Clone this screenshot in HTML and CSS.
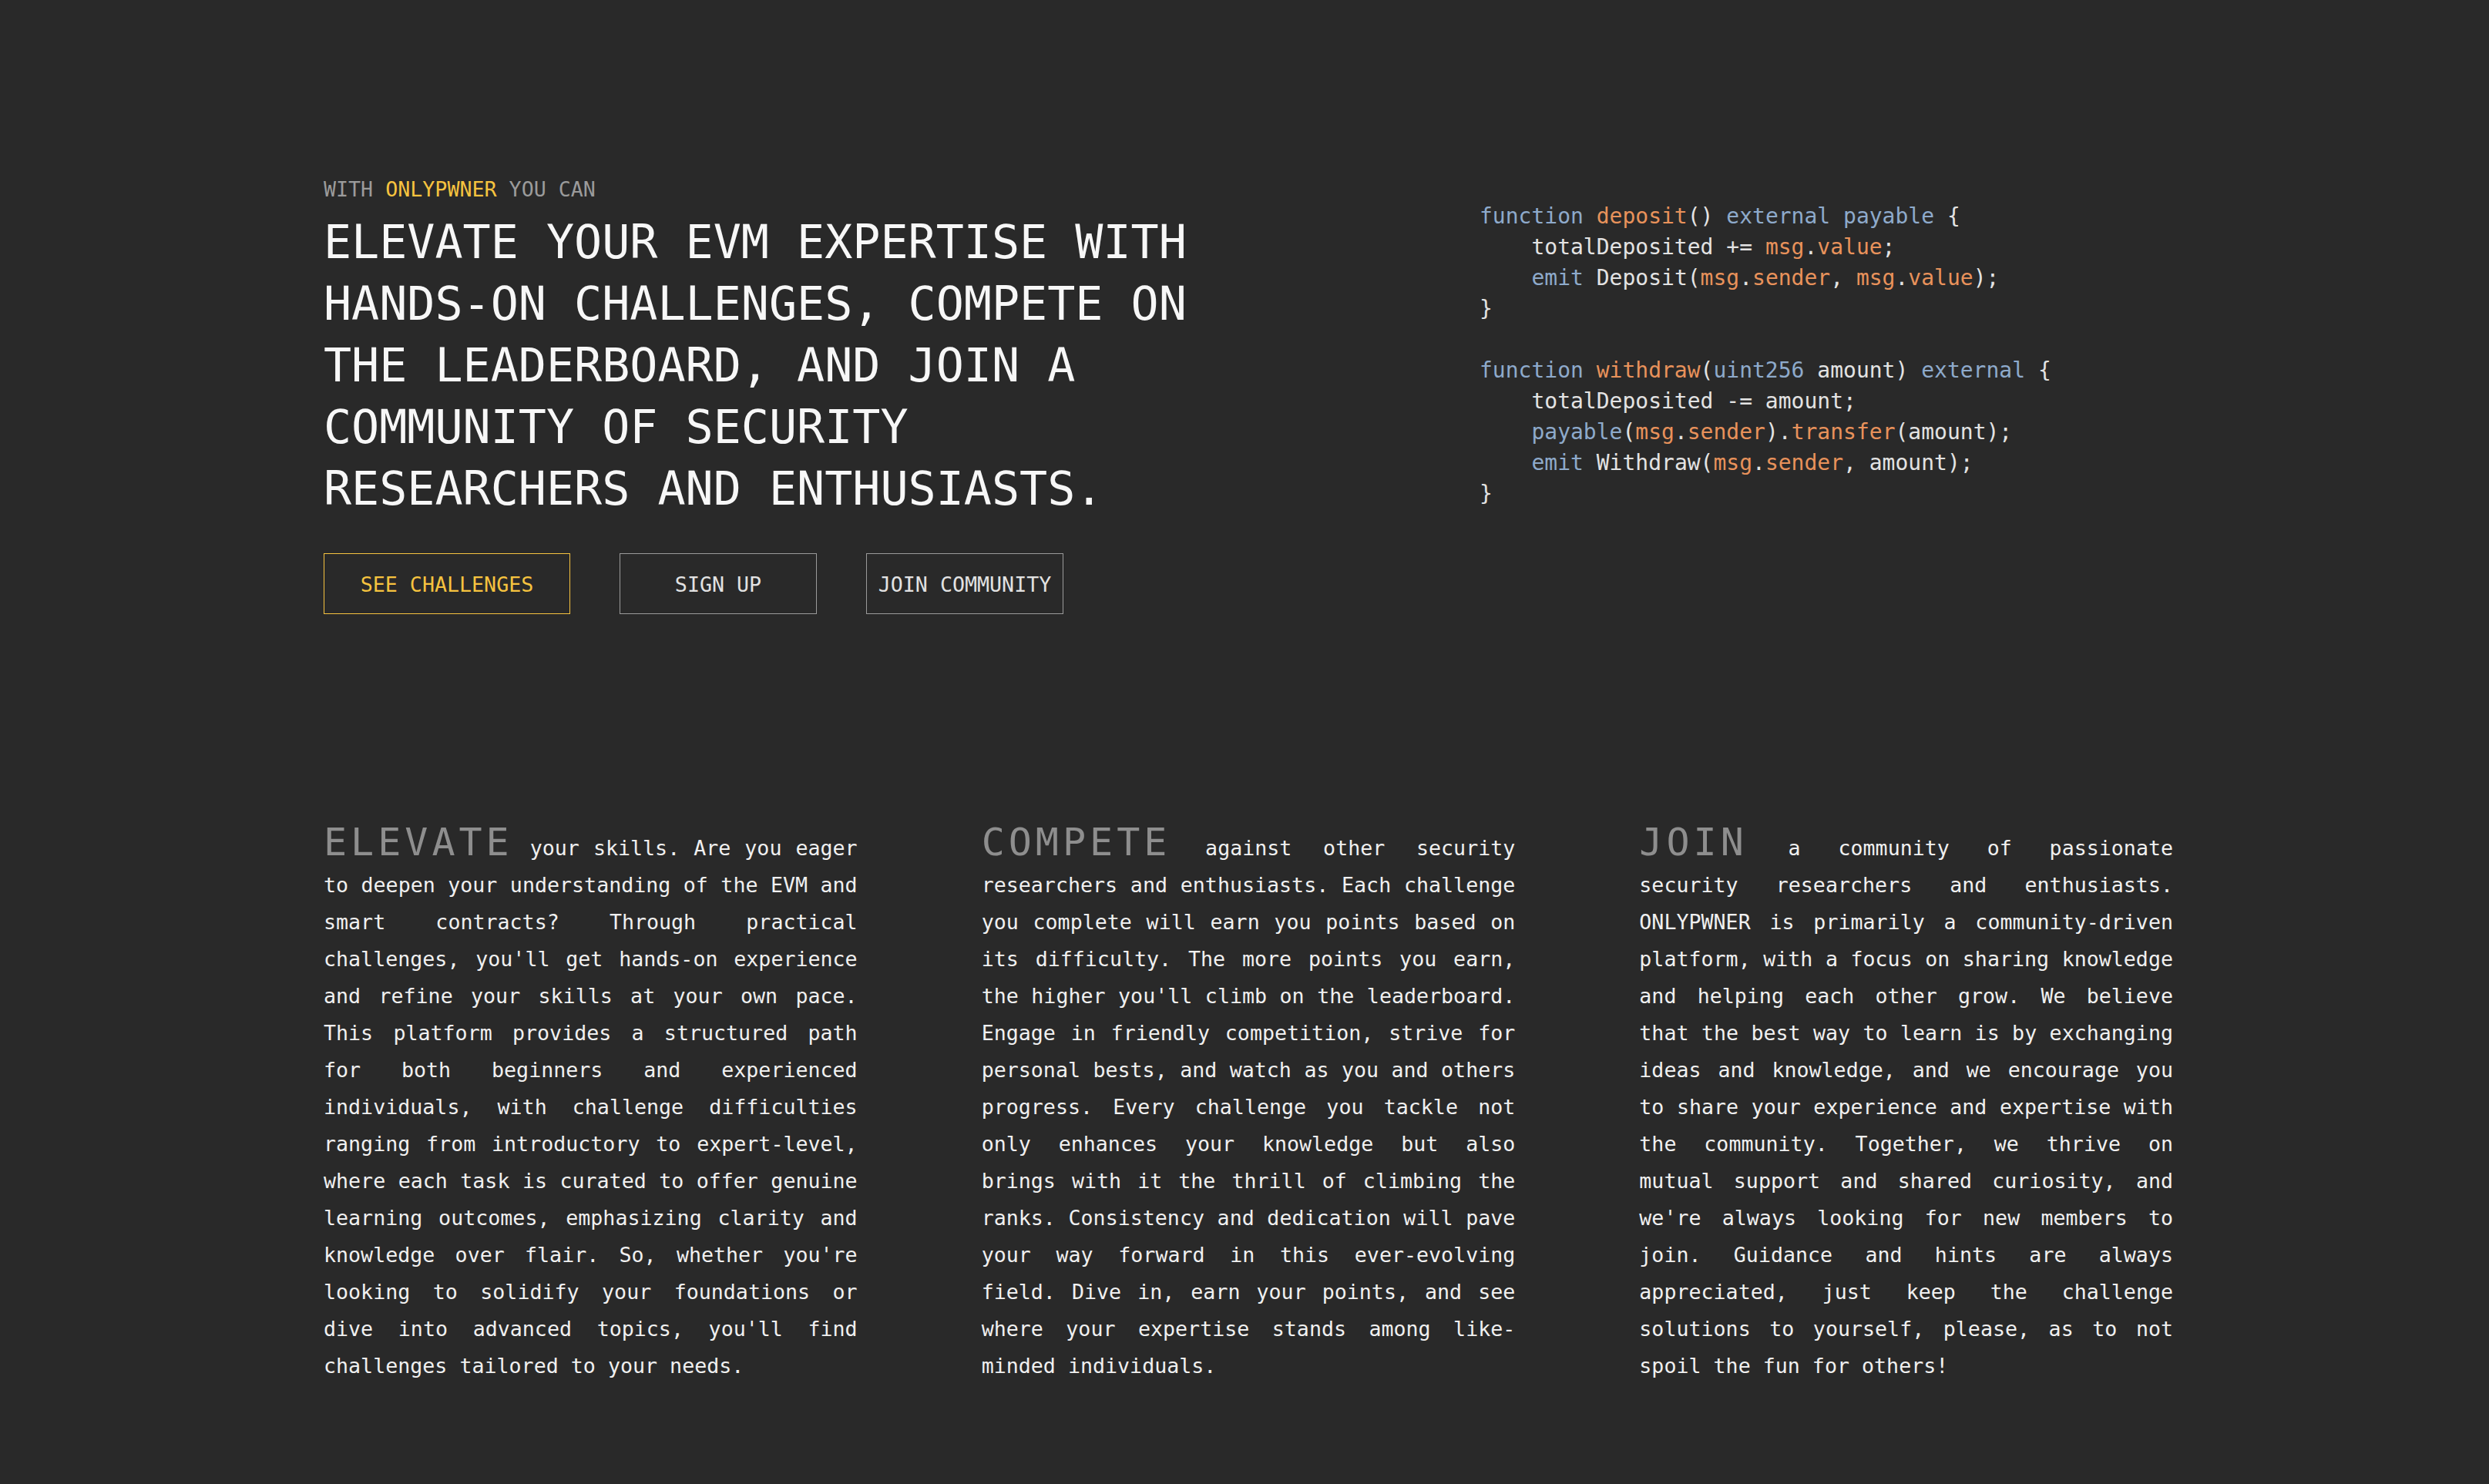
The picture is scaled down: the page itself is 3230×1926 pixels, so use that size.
FILE: index.html
```html
<!DOCTYPE html>
<html lang="en">
<head>
<meta charset="utf-8">
<title>OnlyPwner</title>
<link rel="stylesheet" href="styles.css">
</head>
<body>
<main class="page">
  <section class="hero">
    <div class="hero-text">
      <p class="kicker">WITH <span class="brand">ONLYPWNER</span> YOU CAN</p>
      <h1 class="headline">ELEVATE YOUR EVM EXPERTISE WITH HANDS-ON CHALLENGES, COMPETE ON THE LEADERBOARD, AND JOIN A COMMUNITY OF SECURITY RESEARCHERS AND ENTHUSIASTS.</h1>
      <div class="actions">
        <a class="btn btn-primary">SEE CHALLENGES</a>
        <a class="btn btn-secondary">SIGN UP</a>
        <a class="btn btn-secondary">JOIN COMMUNITY</a>
      </div>
    </div>
    <pre class="code"><span class="kw">function</span> <span class="fn">deposit</span>() <span class="kw">external</span> <span class="kw">payable</span> {
    totalDeposited += <span class="fn">msg</span>.<span class="fn">value</span>;
    <span class="kw">emit</span> Deposit(<span class="fn">msg</span>.<span class="fn">sender</span>, <span class="fn">msg</span>.<span class="fn">value</span>);
}

<span class="kw">function</span> <span class="fn">withdraw</span>(<span class="kw">uint256</span> amount) <span class="kw">external</span> {
    totalDeposited -= amount;
    <span class="kw">payable</span>(<span class="fn">msg</span>.<span class="fn">sender</span>).<span class="fn">transfer</span>(amount);
    <span class="kw">emit</span> Withdraw(<span class="fn">msg</span>.<span class="fn">sender</span>, amount);
}</pre>
  </section>

  <section class="features">
    <p class="feature"><span class="feature-title">ELEVATE</span> your skills. Are you eager to deepen your understanding of the EVM and smart contracts? Through practical challenges, you'll get hands-on experience and refine your skills at your own pace. This platform provides a structured path for both beginners and experienced individuals, with challenge difficulties ranging from introductory to expert-level, where each task is curated to offer genuine learning outcomes, emphasizing clarity and knowledge over flair. So, whether you're looking to solidify your foundations or dive into advanced topics, you'll find challenges tailored to your needs.</p>
    <p class="feature"><span class="feature-title">COMPETE</span> against other security researchers and enthusiasts. Each challenge you complete will earn you points based on its difficulty. The more points you earn, the higher you'll climb on the leaderboard. Engage in friendly competition, strive for personal bests, and watch as you and others progress. Every challenge you tackle not only enhances your knowledge but also brings with it the thrill of climbing the ranks. Consistency and dedication will pave your way forward in this ever-evolving field. Dive in, earn your points, and see where your expertise stands among like-minded individuals.</p>
    <p class="feature"><span class="feature-title">JOIN</span> a community of passionate security researchers and enthusiasts. ONLYPWNER is primarily a community-driven platform, with a focus on sharing knowledge and helping each other grow. We believe that the best way to learn is by exchanging ideas and knowledge, and we encourage you to share your experience and expertise with the community. Together, we thrive on mutual support and shared curiosity, and we're always looking for new members to join. Guidance and hints are always appreciated, just keep the challenge solutions to yourself, please, as to not spoil the fun for others!</p>
  </section>
</main>
</body>
</html>
```

FILE: styles.css
```css
* {
  box-sizing: border-box;
}

html, body {
  margin: 0;
  padding: 0;
  background: #292929;
}

body {
  min-height: 1926px;
  font-family: "DejaVu Sans Mono", "Liberation Mono", monospace;
  color: #f0f0f0;
  font-size: 26.65px;
}

.page {
  width: 2410px;
  margin: 0 auto;
  padding: 230px 0 0 10px;
}

.hero {
  display: flex;
  justify-content: space-between;
  align-items: flex-start;
}

.hero-text {
  width: 1150px;
}

.kicker {
  margin: 0;
  font-size: 26.65px;
  line-height: 32px;
  color: #9b9b9b;
}

.brand {
  color: #f6c33f;
}

.headline {
  margin: 12px 0 0;
  font-size: 60px;
  line-height: 80px;
  font-weight: normal;
  color: #f7f7f7;
}

.actions {
  display: flex;
  gap: 64px;
  margin-top: 44px;
}

.btn {
  display: block;
  height: 79px;
  padding: 24px 0 21px;
  line-height: 32px;
  font-size: 26.65px;
  text-align: center;
  cursor: pointer;
}

.btn-primary {
  width: 320px;
  border: 1px solid #f6c33f;
  color: #f6c33f;
}

.btn-secondary {
  width: 256px;
  border: 1px solid #9a9a9a;
  color: #e2e2e2;
}

.code {
  width: 900px;
  margin: 31px 0 0;
  font-family: "DejaVu Sans Mono", monospace;
  font-size: 28px;
  line-height: 40px;
  color: #e3e3e3;
  white-space: pre;
}

.kw {
  color: #8eaacb;
}

.fn {
  color: #e8925b;
}

.features {
  display: grid;
  grid-template-columns: repeat(3, 1fr);
  column-gap: 161px;
  margin-top: 272px;
}

.feature {
  margin: 0;
  font-size: 26.65px;
  line-height: 48px;
  text-align: justify;
  color: #f0f0f0;
}

.feature-title {
  font-size: 50px;
  letter-spacing: 5px;
  color: #8e8e8e;
  margin-right: 4px;
}
```
